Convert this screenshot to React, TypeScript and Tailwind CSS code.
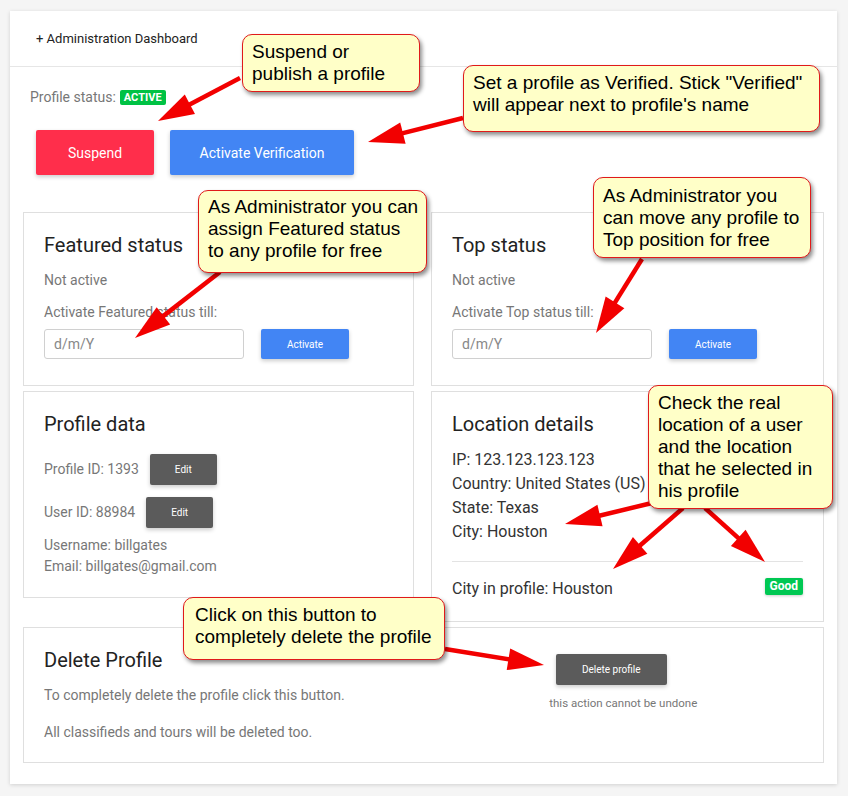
// Admin profile page with tutorial callouts layered on top.

type Pt = [number, number];

const ARROWS: [Pt, Pt][] = [
  [[240, 78], [158, 121]],
  [[463, 118], [368, 142]],
  [[220, 272], [135, 338]],
  [[642, 259], [596, 333]],
  [[652, 503], [565, 524]],
  [[683, 508], [613, 569]],
  [[705, 508], [765, 562]],
  [[445, 649], [544, 665]],
];

function Arrow({ from, to }: { from: Pt; to: Pt }) {
  const [x1, y1] = from;
  const [x2, y2] = to;
  const len = Math.hypot(x2 - x1, y2 - y1);
  const ux = (x2 - x1) / len;
  const uy = (y2 - y1) / len;
  const head = 36;
  const half = 11;
  const bx = x2 - ux * head;
  const by = y2 - uy * head;
  const pts = [
    [x2, y2],
    [bx - uy * half, by + ux * half],
    [bx + uy * half, by - ux * half],
  ]
    .map((p) => p.join(","))
    .join(" ");
  return (
    <g>
      <line
        x1={x1}
        y1={y1}
        x2={bx + ux * 4}
        y2={by + uy * 4}
        stroke="#f20000"
        strokeWidth={4.5}
      />
      <polygon points={pts} fill="#f20000" />
    </g>
  );
}

function Callout({
  className,
  lines,
}: {
  className: string;
  lines: string[];
}) {
  return (
    <div
      className={`absolute rounded-[10px] border-[1.5px] border-[#e01a1a] bg-[#ffffc8] pl-[9px] text-[19px] leading-[22px] text-black whitespace-nowrap shadow-[2px_3px_4px_rgba(0,0,0,0.45)] font-['Liberation_Sans',Arial,sans-serif] ${className}`}
    >
      {lines.map((l) => (
        <div key={l}>{l}</div>
      ))}
    </div>
  );
}

function Panel({
  title,
  className = "",
  children,
}: {
  title: string;
  className?: string;
  children: React.ReactNode;
}) {
  return (
    <div className={`border border-[#dfdfdf] px-[20px] pt-[20px] ${className}`}>
      <h2 className="text-[20px] leading-[24px] text-[#222]">{title}</h2>
      {children}
    </div>
  );
}

function StatusPanel({ title, label }: { title: string; label: string }) {
  return (
    <Panel title={title} className="pb-[26px]">
      <div className="mt-[13px] text-[14px] leading-[20px] text-[#777]">Not active</div>
      <div className="mt-[12px] text-[14px] leading-[20px] text-[#777]">{label}</div>
      <div className="mt-[7px] flex items-center gap-[17px]">
        <div className="h-[30px] w-[200px] rounded-[3px] border border-[#d0d0d0] pl-[9px] text-[14px] leading-[28px] text-[#888]">
          d/m/Y
        </div>
        <button className="h-[30px] w-[88px] rounded-[2px] bg-[#4285f4] text-[10px] text-white shadow-[0_2px_4px_rgba(0,0,0,0.2)]">
          Activate
        </button>
      </div>
    </Panel>
  );
}

function EditBtn() {
  return (
    <button className="h-[31px] w-[67px] rounded-[2px] bg-[#5b5b5b] text-[10px] text-white shadow-[0_2px_4px_rgba(0,0,0,0.2)]">
      Edit
    </button>
  );
}

export default function App() {
  return (
    <div className="relative min-h-screen bg-[#f5f5f5] pl-[10px] pt-[11px] font-['Roboto',sans-serif]">
      <div className="w-[827px] bg-white shadow-[0_1px_4px_rgba(0,0,0,0.15)]">
        <div className="flex h-[56px] items-center border-b border-[#e6e6e6] pl-[26px] text-[13px] text-[#222]">
          + Administration Dashboard
        </div>

        <div className="px-[13px] pb-[21px]">
          <div className="flex items-center gap-[4px] pl-[7px] pt-[20px] text-[14px] leading-[20px] text-[#777]">
            Profile status:
            <span className="h-[15px] rounded-[2px] bg-[#00c244] px-[4px] text-[11px] font-bold leading-[15px] text-white">
              ACTIVE
            </span>
          </div>

          <div className="mt-[23px] flex gap-[16px] pl-[13px]">
            <button className="h-[45px] w-[118px] rounded-[2px] bg-[#ff2e4b] pt-[2px] text-[14px] text-white shadow-[0_2px_4px_rgba(0,0,0,0.2)]">
              Suspend
            </button>
            <button className="h-[45px] w-[184px] rounded-[2px] bg-[#4285f4] pt-[2px] text-[14px] text-white shadow-[0_2px_4px_rgba(0,0,0,0.2)]">
              Activate Verification
            </button>
          </div>

          <div className="mt-[37px] grid grid-cols-[391px_1fr] items-start gap-x-[17px] gap-y-[5px]">
            <StatusPanel title="Featured status" label="Activate Featured status till:" />
            <StatusPanel title="Top status" label="Activate Top status till:" />

            <Panel title="Profile data" className="pb-[20px]">
              <div className="mt-[18px] flex items-center gap-[11px] text-[14px] text-[#777]">
                Profile ID: 1393
                <EditBtn />
              </div>
              <div className="mt-[12px] flex items-center gap-[11px] text-[14px] text-[#777]">
                User ID: 88984
                <EditBtn />
              </div>
              <div className="mt-[7px] text-[14px] leading-[21px] text-[#777]">
                <div>Username: billgates</div>
                <div>Email: billgates@gmail.com</div>
              </div>
            </Panel>

            <Panel title="Location details" className="pb-[20px]">
              <div className="mt-[12px] text-[16px] leading-[24px] text-[#333]">
                <div>IP: 123.123.123.123</div>
                <div>Country: United States (US)</div>
                <div>State: Texas</div>
                <div>City: Houston</div>
              </div>
              <div className="mt-[17px] border-t border-[#e3e3e3]" />
              <div className="mt-[15px] flex items-center justify-between text-[16px] leading-[24px] text-[#333]">
                City in profile: Houston
                <span className="mb-[6px] h-[17px] rounded-[2px] bg-[#00c853] px-[5px] text-[12px] font-bold leading-[17px] text-white shadow-[0_1px_3px_rgba(0,0,0,0.2)]">
                  Good
                </span>
              </div>
            </Panel>
          </div>

          <div className="mt-[5px] flex border border-[#dfdfdf]">
            <div className="flex-1 pb-[20px] pl-[20px] pt-[20px]">
              <h2 className="text-[20px] leading-[24px] text-[#222]">Delete Profile</h2>
              <p className="mt-[13px] text-[14px] leading-[20px] text-[#777]">
                To completely delete the profile click this button.
              </p>
              <p className="mt-[17px] text-[14px] leading-[20px] text-[#777]">
                All classifieds and tours will be deleted too.
              </p>
            </div>
            <div className="flex flex-1 flex-col items-center pt-[26px]">
              <button className="mr-[34px] h-[31px] w-[111px] rounded-[2px] bg-[#5b5b5b] text-[10px] text-white shadow-[0_2px_4px_rgba(0,0,0,0.2)]">
                Delete profile
              </button>
              <div className="mr-[10px] mt-[10px] text-[11.5px] leading-[16px] text-[#777]">
                this action cannot be undone
              </div>
            </div>
          </div>
        </div>
      </div>

      <svg
        className="pointer-events-none absolute left-0 top-0"
        width={848}
        height={796}
      >
        {ARROWS.map(([a, b], i) => (
          <Arrow key={i} from={a} to={b} />
        ))}
      </svg>

      <Callout
        className="left-[242px] top-[34px] h-[58px] w-[178px] pt-[6px]"
        lines={["Suspend or", "publish a profile"]}
      />
      <Callout
        className="left-[463px] top-[65px] h-[67px] w-[357px] pt-[6px]"
        lines={['Set a profile as Verified. Stick "Verified"', "will appear next to profile's name"]}
      />
      <Callout
        className="left-[198px] top-[190px] h-[83px] w-[229px] pt-[5px]"
        lines={["As Administrator you can", "assign Featured status", "to any profile for free"]}
      />
      <Callout
        className="left-[593px] top-[177px] h-[81px] w-[218px] pt-[7px]"
        lines={["As Administrator you", "can move any profile to", "Top position for free"]}
      />
      <Callout
        className="left-[648px] top-[385px] h-[124px] w-[185px] pt-[6px]"
        lines={["Check the real", "location of a user", "and the location", "that he selected in", "his profile"]}
      />
      <Callout
        className="left-[183px] top-[597px] h-[63px] w-[262px] pt-[6px] pl-[11px]"
        lines={["Click on this button to", "completely delete the profile"]}
      />
    </div>
  );
}
